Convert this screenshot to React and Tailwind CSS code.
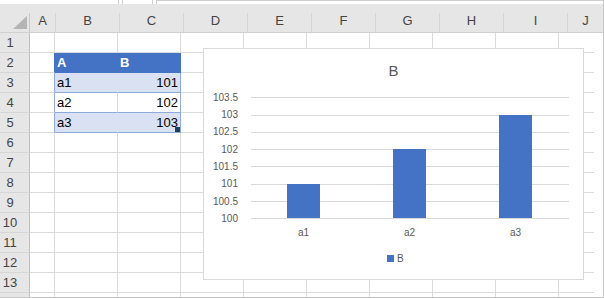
const COLS = ['A', 'B', 'C', 'D', 'E', 'F', 'G', 'H', 'I', 'J'];
const ROWS = [1, 2, 3, 4, 5, 6, 7, 8, 9, 10, 11, 12, 13];

const colWidth = (c) => (c === 'A' ? 'w-[25px]' : c === 'J' ? 'w-[35px]' : 'w-[63px]');

// table occupies B2:C5
const cellClass = (row, col) => {
  const base = 'h-full shrink-0 flex items-center text-[13px] text-black px-[2px]';
  const w = colWidth(col);
  const last = col === 'J' ? 'border-b border-[#dadada]' : null;
  if (last) return `${base} ${w} ${last}`;
  if (col === 'A' && row === 2) return `${base} ${w} border-r border-b border-r-[#4472c4] border-b-[#dadada]`;
  if (col === 'A' && row >= 3 && row <= 5) return `${base} ${w} border-r border-b border-r-[#8ea9db] border-b-[#dadada]`;
  if (row === 2 && col === 'B') return `${base} ${w} bg-[#4472c4] text-white font-bold border-r border-b border-[#4472c4]`;
  if (row === 2 && col === 'C') return `${base} ${w} bg-[#4472c4] text-white font-bold border-r border-b border-[#4472c4]`;
  if ((row === 3 || row === 5) && col === 'B') return `${base} ${w} bg-[#d9e1f2] border-r border-b border-r-[#d9e1f2] border-b-[#8ea9db]`;
  if ((row === 3 || row === 5) && col === 'C') return `${base} ${w} justify-end bg-[#d9e1f2] border-r border-b border-[#8ea9db] relative`;
  if (row === 4 && col === 'B') return `${base} ${w} border-r border-b border-r-[#dadada] border-b-[#8ea9db]`;
  if (row === 4 && col === 'C') return `${base} ${w} justify-end border-r border-b border-[#8ea9db]`;
  return `${base} ${w} border-r border-b border-[#dadada]`;
};

const DATA = {
  2: { B: 'A', C: 'B' },
  3: { B: 'a1', C: '101' },
  4: { B: 'a2', C: '102' },
  5: { B: 'a3', C: '103' },
};

const Chart = () => {
  const ticks = [100, 100.5, 101, 101.5, 102, 102.5, 103, 103.5];
  const y = (v) => 169.3 - (v - 100) * 34.6;
  const bars = [
    { label: 'a1', value: 101, x: 83 },
    { label: 'a2', value: 102, x: 189 },
    { label: 'a3', value: 103, x: 295 },
  ];
  const font = { fontFamily: '"Liberation Sans", Arial, sans-serif' };
  return (
    <svg width="379" height="230" viewBox="0 0 379 230">
      <text x="189.5" y="26.5" textAnchor="middle" fontSize="15" fill="#595959" style={font}>B</text>
      {ticks.map((t) => (
        <g key={t}>
          <line x1="47" x2="365" y1={Math.round(y(t)) + 0.5} y2={Math.round(y(t)) + 0.5} stroke="#d9d9d9" strokeWidth="1" />
          <text x="34" y={y(t) + 3.5} textAnchor="end" fontSize="10" fill="#595959" style={font}>{t}</text>
        </g>
      ))}
      {bars.map((b) => (
        <g key={b.label}>
          <rect x={b.x} y={Math.round(y(b.value))} width="33" height={Math.round(y(100)) - Math.round(y(b.value))} fill="#4472c4" />
          <text x={b.x + 16.5} y="186.8" textAnchor="middle" fontSize="10" fill="#595959" style={font}>{b.label}</text>
        </g>
      ))}
      <rect x="183" y="206" width="7" height="7" fill="#4472c4" />
      <text x="193" y="212.5" fontSize="10" fill="#595959" style={font}>B</text>
    </svg>
  );
};

export default function App() {
  return (
    <div className="relative w-[604px] h-[298px] overflow-hidden bg-white border-r border-b border-[#c6c6c6] flex flex-col font-['Liberation_Sans',Arial,sans-serif]">
      {/* strip above the column headers */}
      <div className="flex h-[4px] shrink-0">
        <div className="w-[118px]" />
        <div className="w-px bg-[#cfcfcf]" />
        <div className="w-[3px]" />
        <div className="w-px bg-[#cfcfcf]" />
        <div className="w-[29px]" />
        <div className="w-px bg-[#cfcfcf]" />
        <div className="w-[3px]" />
        <div className="w-px bg-[#cfcfcf]" />
        <div className="flex-1 border-t border-[#cfcfcf]" />
      </div>

      {/* column headers */}
      <div className="flex items-end h-[29px] shrink-0 bg-[#e6e6e6] border-b border-[#d0d0d0]">
        <div className="w-[29px] h-full flex items-end justify-end pr-[2px] pb-[3px]">
          <svg width="14" height="13" viewBox="0 0 14 13">
            <polygon points="14,0 14,13 0,13" fill="#b5b5b5" />
          </svg>
        </div>
        <div className="w-px h-[19px] bg-[#c8c8c8]" />
        {COLS.map((c) => (
          <div key={c} className="flex items-end h-full">
            <div className={`${colWidth(c)} h-full flex items-center justify-center pt-[6px] text-[13px] text-[#444]`}>{c}</div>
            {c !== 'J' && <div className="w-px h-[19px] bg-[#d4d4d4]" />}
          </div>
        ))}
      </div>

      {/* rows */}
      {ROWS.map((r) => (
        <div key={r} className="flex h-[20px] shrink-0">
          <div className="w-[30px] h-full shrink-0 flex items-center justify-center pr-[9px] bg-[#e6e6e6] border-r border-b border-r-[#c0c0c0] border-b-[#d6d6d6] text-[13px] text-[#444]">
            {r}
          </div>
          {COLS.map((c) => (
            <div key={c} className={cellClass(r, c)}>
              {DATA[r]?.[c]}
              {r === 5 && c === 'C' && <div className="absolute right-0 bottom-0 w-[5px] h-[5px] bg-[#1d3f63]" />}
            </div>
          ))}
        </div>
      ))}
      <div className="flex flex-1 overflow-hidden">
        <div className="w-[30px] shrink-0 bg-[#e6e6e6] border-r border-[#c0c0c0]" />
        {COLS.map((c) => (
          <div key={c} className={`${colWidth(c)} shrink-0 ${c === 'J' ? '' : 'border-r border-[#dadada]'}`} />
        ))}
      </div>

      {/* embedded chart object */}
      <div className="absolute left-[203px] top-[48px] w-[381px] h-[232px] bg-white border border-[#d9d9d9]">
        <Chart />
      </div>
    </div>
  );
}
